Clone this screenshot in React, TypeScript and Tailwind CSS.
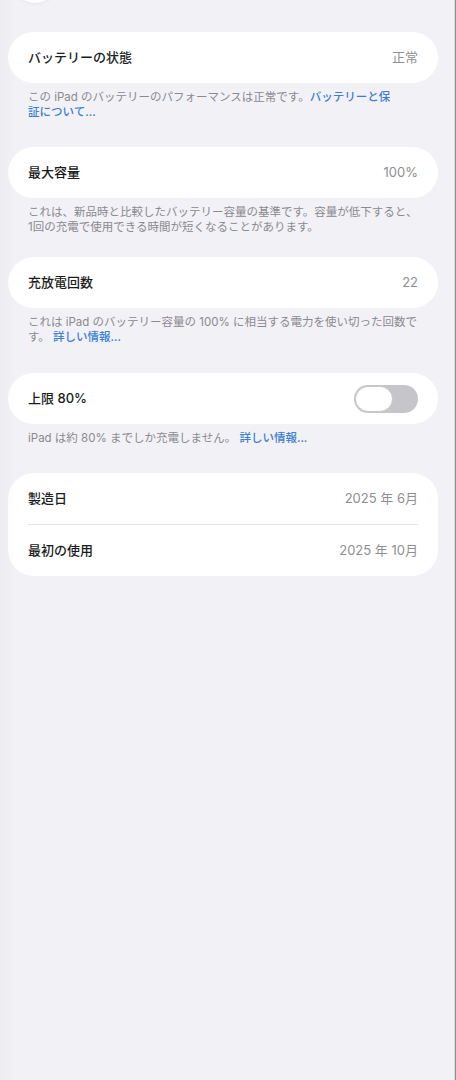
import React from "react";

const font = { fontFamily: 'Inter, "Noto Sans CJK JP", "Noto Sans", sans-serif' };

function Row({ label, value }: { label: string; value?: React.ReactNode }) {
  return (
    <div className="flex h-[51px] items-center justify-between px-5">
      <span className="text-[13px] font-medium text-[#1c1c1e]">{label}</span>
      {value}
    </div>
  );
}

function Value({ children }: { children: React.ReactNode }) {
  return <span className="text-[13px] text-[#8e8e93]">{children}</span>;
}

function Card({ children }: { children: React.ReactNode }) {
  return <div className="rounded-[26px] bg-white">{children}</div>;
}

function Note({ children }: { children: React.ReactNode }) {
  return (
    <div className="px-5 pt-[7px] text-[11.5px] leading-[15px] text-[#8a8a8e] whitespace-nowrap">
      {children}
    </div>
  );
}

function Link({ children }: { children: React.ReactNode }) {
  return <span className="text-[#3b7fd4] font-medium">{children}</span>;
}

function Toggle() {
  return (
    <div className="relative h-[28px] w-[64px] rounded-full bg-[#c6c6ca]">
      <div className="absolute left-[1px] top-[1px] h-[26px] w-[38px] rounded-full border border-[#c8c8cc] bg-white" />
    </div>
  );
}

export default function App() {
  return (
    <div className="flex min-h-[1080px] w-full bg-[#f2f1f6]" style={font}>
      <div className="relative flex-1 overflow-hidden">
        {/* floating back button, scrolled mostly out of view */}
        <div className="absolute left-[13px] top-[-41px] h-[44px] w-[44px] rounded-full bg-white shadow-[0_1px_4px_rgba(0,0,0,0.06)]" />
        <div className="pointer-events-none absolute inset-y-0 left-0 w-[16px] bg-gradient-to-r from-[rgba(0,0,0,0.025)] to-transparent" />

        <div className="flex flex-col pl-2 pr-4 pt-8">
          <Card>
            <Row label="バッテリーの状態" value={<Value>正常</Value>} />
          </Card>
          <Note>
            この iPad のバッテリーのパフォーマンスは正常です。<Link>バッテリーと保</Link>
            <br />
            <Link>証について...</Link>
          </Note>

          <div className="mt-[27px]">
            <Card>
              <Row label="最大容量" value={<Value>100%</Value>} />
            </Card>
            <Note>
              これは、新品時と比較したバッテリー容量の基準です。容量が低下すると、
              <br />
              1回の充電で使用できる時間が短くなることがあります。
            </Note>
          </div>

          <div className="mt-[22px]">
            <Card>
              <Row label="充放電回数" value={<Value>22</Value>} />
            </Card>
            <Note>
              これは iPad のバッテリー容量の 100% に相当する電力を使い切った回数で
              <br />
              す。 <Link>詳しい情報...</Link>
            </Note>
          </div>

          <div className="mt-[28px]">
            <Card>
              <Row label="上限 80%" value={<Toggle />} />
            </Card>
            <Note>
              iPad は約 80% までしか充電しません。 <Link>詳しい情報...</Link>
            </Note>
          </div>

          <div className="mt-[27px]">
            <Card>
              <Row label="製造日" value={<Value>2025 年 6月</Value>} />
              <div className="mx-5 h-px bg-[#e4e4e8]" />
              <Row label="最初の使用" value={<Value>2025 年 10月</Value>} />
            </Card>
          </div>
        </div>
      </div>
      <div className="w-px bg-[#dcdce0]" />
      <div className="w-[1px] bg-[#8e8e92]" />
    </div>
  );
}
